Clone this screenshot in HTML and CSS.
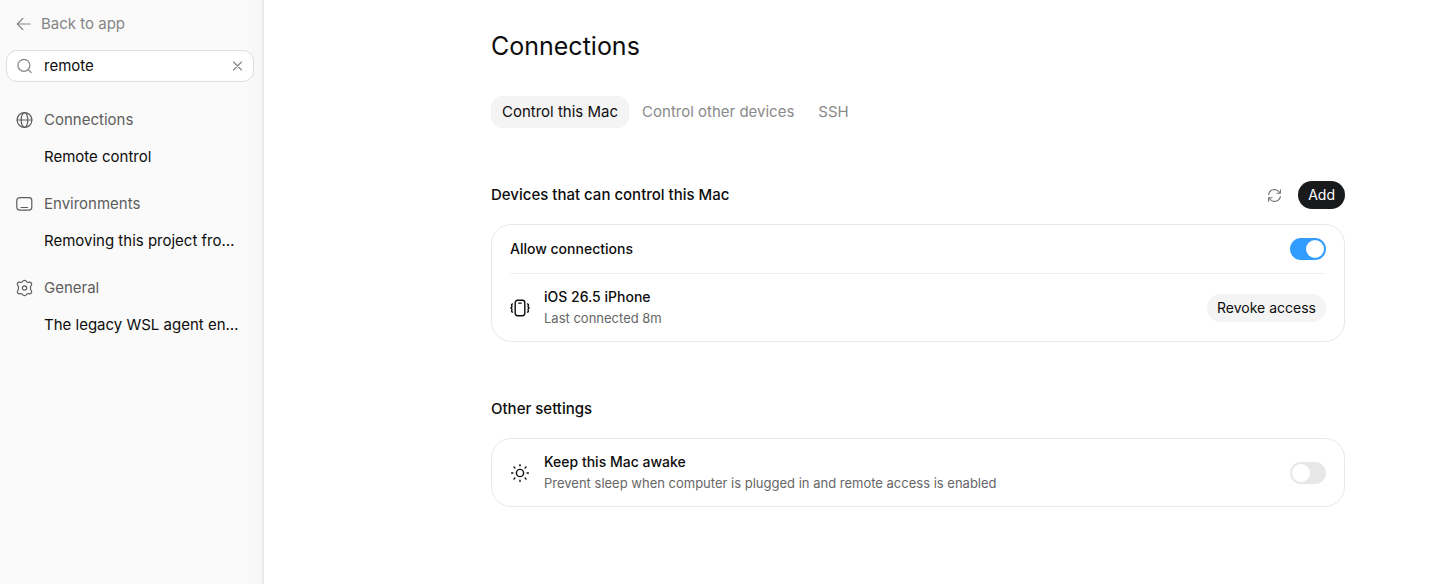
FILE: index.html
```html
<!DOCTYPE html>
<html lang="en">
<head>
<meta charset="utf-8">
<meta name="viewport" content="width=device-width, initial-scale=1">
<title>Connections</title>
<link rel="stylesheet" href="styles.css">
</head>
<body>
<div class="app">
  <aside class="sidebar">
    <a class="back" href="#">
      <svg class="icon" viewBox="0 0 18 18" aria-hidden="true"><path d="M15 9H2.500M7.800 3.500L2.300 9l5.500 5.500"/></svg>
      <span>Back to app</span>
    </a>
    <div class="search">
      <svg class="icon" viewBox="0 0 18 18" aria-hidden="true"><circle cx="7.900" cy="8.300" r="6"/><path d="M12.300 12.700l2.700 2.800"/></svg>
      <input class="search-input" type="text" value="remote" aria-label="Search settings">
      <button class="clear" type="button" aria-label="Clear search">
        <svg class="clear-icon" viewBox="0 0 12 12" aria-hidden="true"><path d="M2.500 2l8 8M10.500 2l-8 8"/></svg>
      </button>
    </div>
    <nav class="results" aria-label="Search results">
      <section class="group">
        <h2 class="group-title">
          <svg class="icon" viewBox="0 0 18 18" aria-hidden="true"><circle cx="8.500" cy="9" r="7.400"/><ellipse cx="8.500" cy="9" rx="3.300" ry="7.400"/><path d="M1.100 9h14.800"/></svg>
          <span>Connections</span>
        </h2>
        <a class="result" href="#">Remote control</a>
      </section>
      <section class="group">
        <h2 class="group-title">
          <svg class="icon" viewBox="0 0 18 18" aria-hidden="true"><rect x=".8" y="2.700" width="15" height="12.400" rx="2.800"/><path d="M5 12.500h6.600"/></svg>
          <span>Environments</span>
        </h2>
        <a class="result" href="#">Removing this project fro…</a>
      </section>
      <section class="group">
        <h2 class="group-title">
          <svg class="icon" viewBox="0.500 0 18 18" aria-hidden="true"><path d="M7.600 1.900Q9 .7 10.400 1.900L11.300 2.900Q11.900 3.500 12.800 3.300L14 3.100Q15.700 3 16.100 4.700Q16.300 5.600 15.600 6.500Q15 7.400 15 8Q15 9 15 10Q15 10.600 15.600 11.500Q16.300 12.400 16.100 13.300Q15.700 15 14 14.900L12.800 14.700Q11.900 14.500 11.300 15.100L10.400 16.100Q9 17.300 7.600 16.100L6.700 15.100Q6.100 14.500 5.200 14.700L4 14.900Q2.300 15 1.900 13.300Q1.700 12.400 2.400 11.500Q3 10.600 3 10Q3 9 3 8Q3 7.400 2.400 6.500Q1.700 5.600 1.900 4.700Q2.300 3 4 3.100L5.200 3.300Q6.100 3.500 6.700 2.900Z"/><circle cx="9" cy="9" r="2.200"/></svg>
          <span>General</span>
        </h2>
        <a class="result" href="#">The legacy WSL agent en…</a>
      </section>
    </nav>
  </aside>
  <main class="main">
    <h1 class="title">Connections</h1>
    <div class="tabs" role="tablist">
      <button class="tab tab-active" type="button" role="tab" aria-selected="true">Control this Mac</button>
      <button class="tab" type="button" role="tab" aria-selected="false">Control other devices</button>
      <button class="tab" type="button" role="tab" aria-selected="false">SSH</button>
    </div>
    <section class="section">
      <header class="section-head">
        <h2 class="section-title">Devices that can control this Mac</h2>
        <button class="refresh" type="button" aria-label="Refresh devices">
          <svg class="refresh-icon" viewBox="0 0 16 16" aria-hidden="true"><path d="M1.700 7A6.300 6.300 0 0 1 13 4.300L14.300 5.600M14.300 1.800v3.800h-3.800M14.300 9A6.300 6.300 0 0 1 3 11.700L1.700 10.400M1.700 14.200v-3.800h3.800"/></svg>
        </button>
        <button class="add" type="button">Add</button>
      </header>
      <div class="card">
        <div class="row row-short">
          <label class="row-title row-text" for="allow">Allow connections</label>
          <input class="switch" id="allow" type="checkbox" role="switch" checked>
        </div>
        <div class="row">
          <svg class="row-icon" viewBox="0 0 20 20" aria-hidden="true"><rect x="5.200" y="2.300" width="9.600" height="15.400" rx="2.400"/><path d="M8.700 5.100h2.600M2.500 5.900Q1.200 6.300 1.800 7.700Q2.300 9.200.8 10Q2.300 10.800 1.800 12.300Q1.200 13.700 2.500 14.100M17.500 5.900Q18.800 6.300 18.200 7.700Q17.700 9.200 19.200 10Q17.700 10.800 18.200 12.300Q18.800 13.700 17.500 14.100"/></svg>
          <div class="row-text">
            <div class="row-title">iOS 26.5 iPhone</div>
            <div class="row-note">Last connected 8m</div>
          </div>
          <button class="revoke" type="button">Revoke access</button>
        </div>
      </div>
    </section>
    <section class="section">
      <header class="section-head">
        <h2 class="section-title">Other settings</h2>
      </header>
      <div class="card">
        <div class="row">
          <svg class="row-icon" viewBox="0 0 20 20" aria-hidden="true"><circle cx="10" cy="10" r="3.600"/><path d="M10 1.600v1.300M10 17.100v1.300M1.600 10h1.300M17.100 10h1.300M4 4l.9.9M15.100 15.100l.9.9M4 16l.9-.9M15.100 4.900l.9-.9"/></svg>
          <div class="row-text">
            <label class="row-title" for="awake">Keep this Mac awake</label>
            <div class="row-note">Prevent sleep when computer is plugged in and remote access is enabled</div>
          </div>
          <input class="switch" id="awake" type="checkbox" role="switch">
        </div>
      </div>
    </section>
  </main>
</div>
</body>
</html>
```
FILE: styles.css
```css
* { box-sizing: border-box; }
body {
  margin: 0;
  background: #fff;
  color: #0d0d0d;
  font: 15px/24px Inter, "Liberation Sans", sans-serif;
}
h1, h2 { margin: 0; font-weight: 400; }
button { border: 0; padding: 0; background: none; color: inherit; font: inherit; cursor: pointer; }
a { color: inherit; text-decoration: none; }
svg { display: block; flex: none; fill: none; stroke: currentColor; stroke-linecap: round; stroke-linejoin: round; }
.app { display: flex; min-height: 100vh; }
.sidebar {
  flex: none;
  width: 264px;
  padding: 12px 8px 12px 6px;
  border-right: 2px solid #e8e8e8;
  background: linear-gradient(to right, #fafafa 92%, #f5f6f6);
}
.icon { width: 18px; height: 18px; stroke-width: 1.2; }
.back { display: flex; align-items: center; gap: 8px; padding-left: 9px; color: #858585; }
.search {
  display: flex;
  align-items: center;
  gap: 10px;
  height: 32px;
  margin-top: 14px;
  padding: 0 9px;
  border: 1px solid #dedede;
  border-radius: 11px;
  background: #fff;
  color: #858585;
}
.search-input { flex: 1; min-width: 0; border: 0; padding: 0; outline: 0; background: none; color: #0d0d0d; font: inherit; }
.clear { padding: 1px; }
.clear-icon { width: 12px; height: 12px; stroke-width: 1.1; }
.results { display: flex; flex-direction: column; gap: 23px; margin-top: 26px; padding: 0 8px 0 10px; }
.group { display: flex; flex-direction: column; gap: 13px; }
.group-title { display: flex; align-items: center; gap: 10px; color: #5d5d5d; font-size: 15px; }
.result { overflow: hidden; margin-left: 28px; text-overflow: ellipsis; white-space: nowrap; }
.main { flex: 1; min-width: 0; padding: 28px 111px 28px 227px; }
.title { font-size: 25px; line-height: 36px; }
.tabs { display: flex; gap: 2px; margin-top: 32px; }
.tab { padding: 4px 11px; border-radius: 11px; color: #8a8a8a; }
.tab-active { background: #f4f4f4; color: #0d0d0d; }
.section { margin-top: 52px; }
.section-head { display: flex; align-items: center; gap: 16px; height: 30px; }
.section-title { flex: 1; font-size: 15px; font-weight: 500; }
.refresh { color: #777; }
.refresh-icon { width: 15px; height: 15px; stroke-width: 1.2; }
.add { padding: 2px 10px; border-radius: 14px; background: #181a1c; color: #fff; font-size: 14px; }
.card { margin-top: 14px; padding: 0 18px; border: 1px solid #e8e8e8; border-radius: 20px; }
.row { display: flex; align-items: center; gap: 14px; padding: 12px 0; }
.row-short { padding: 13px 0; }
.row + .row { border-top: 1px solid #f0f0f0; }
.row-icon { width: 20px; height: 20px; stroke-width: 1.4; }
.row-text { flex: 1; min-width: 0; }
.row-title { display: block; font-size: 14px; font-weight: 500; line-height: 22px; }
.row-note { color: #666; font-size: 13px; line-height: 21px; }
.revoke { padding: 2px 10px; border-radius: 14px; background: #f4f4f4; font-size: 14px; }
.switch {
  appearance: none;
  flex: none;
  width: 36px;
  height: 22px;
  margin: 0;
  padding: 2px;
  border-radius: 11px;
  background: #e8e8e8;
  cursor: pointer;
}
.switch::before { content: ""; display: block; width: 18px; height: 18px; border-radius: 50%; background: #fff; }
.switch:checked { background: #339cff; }
.switch:checked::before { margin-left: auto; }
```
